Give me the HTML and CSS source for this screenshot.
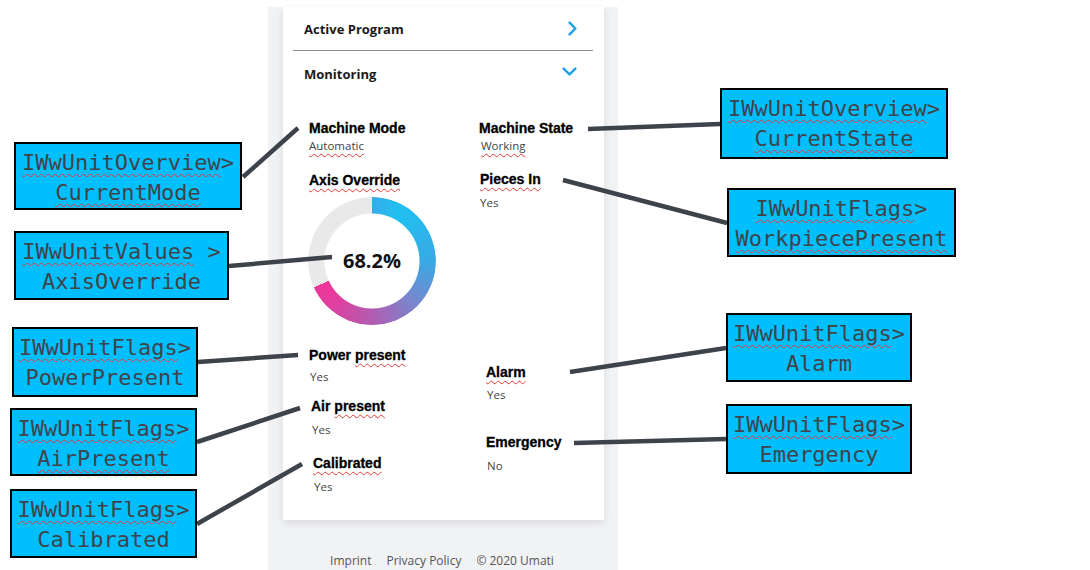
FILE: index.html
```html
<!DOCTYPE html>
<html lang="en">
<head>
<meta charset="utf-8">
<title>Monitoring mapping</title>
<link rel="stylesheet" href="styles.css">
</head>
<body>
<div class="stage">
  <div class="page">
    <div class="card">
      <div class="acc-row acc-row--first">
        <span class="acc-title">Active Program</span>
        <svg class="chev chev-r" width="9" height="15" viewBox="0 0 9 15"><path d="M1.6 1.6 L7.4 7.5 L1.6 13.4" fill="none" stroke="#1aa1e6" stroke-width="2.4" stroke-linecap="round" stroke-linejoin="round"/></svg>
      </div>
      <div class="divider"></div>
      <div class="acc-row acc-row--second">
        <span class="acc-title">Monitoring</span>
        <svg class="chev chev-d" width="15" height="9" viewBox="0 0 15 9"><path d="M1.6 1.6 L7.5 7.4 L13.4 1.6" fill="none" stroke="#1aa1e6" stroke-width="2.4" stroke-linecap="round" stroke-linejoin="round"/></svg>
      </div>
      <div class="monitor">
        <div class="col col-left">
          <div class="field f-mode">
            <div class="lbl">Machine Mode</div>
            <div class="val val--tight"><span class="sq">Automatic</span></div>
          </div>
          <div class="field f-axis">
            <div class="lbl"><span class="sq">Axis Override</span></div>
            <div class="donut">
              <div class="ring"></div>
              <div class="pct">68.2%</div>
            </div>
          </div>
          <div class="field f-power">
            <div class="lbl">Power <span class="sq">present</span></div>
            <div class="val val--6 in1">Yes</div>
          </div>
          <div class="field f-air in2">
            <div class="lbl">Air <span class="sq">present</span></div>
            <div class="val in1">Yes</div>
          </div>
          <div class="field f-calib in4">
            <div class="lbl"><span class="sq">Calibrated</span></div>
            <div class="val in1">Yes</div>
          </div>
        </div>
        <div class="col col-right">
          <div class="field f-state">
            <div class="lbl">Machine State</div>
            <div class="val val--tight in2"><span class="sq">Working</span></div>
          </div>
          <div class="field f-pieces in1">
            <div class="lbl"><span class="sq">Pieces In</span></div>
            <div class="val">Yes</div>
          </div>
          <div class="field f-alarm in7">
            <div class="lbl"><span class="sq">Alarm</span></div>
            <div class="val val--7 in1">Yes</div>
          </div>
          <div class="field f-emerg in7">
            <div class="lbl">Emergency</div>
            <div class="val in1">No</div>
          </div>
        </div>
      </div>
    </div>
    <footer class="footer">
      <span>Imprint</span>
      <span>Privacy Policy</span>
      <span>© 2020 Umati</span>
    </footer>
  </div>

  <svg class="wires" width="1090" height="570" viewBox="0 0 1090 570">
    <g stroke="#3d434b" stroke-width="4.5" fill="none">
      <line x1="243" y1="177" x2="298" y2="128"/>
      <line x1="229" y1="266" x2="332" y2="257"/>
      <line x1="198" y1="362" x2="298" y2="355"/>
      <line x1="197" y1="442" x2="300" y2="408"/>
      <line x1="197" y1="524" x2="302" y2="464"/>
      <line x1="588" y1="129" x2="720" y2="124"/>
      <line x1="563" y1="180" x2="727" y2="223"/>
      <line x1="570" y1="372" x2="726" y2="348"/>
      <line x1="574" y1="443" x2="726" y2="439"/>
    </g>
  </svg>

  <div class="callout c-mode"><div><span class="sq">IWwUnitOverview</span>&gt;</div><div><span class="sq">CurrentMode</span></div></div>
  <div class="callout c-axis"><div><span class="sq">IWwUnitValues</span> &gt;</div><div>AxisOverride</div></div>
  <div class="callout c-power"><div><span class="sq">IWwUnitFlags</span>&gt;</div><div>PowerPresent</div></div>
  <div class="callout c-air"><div><span class="sq">IWwUnitFlags</span>&gt;</div><div><span class="sq">AirPresent</span></div></div>
  <div class="callout c-calib"><div><span class="sq">IWwUnitFlags</span>&gt;</div><div>Calibrated</div></div>
  <div class="callout c-state"><div><span class="sq">IWwUnitOverview</span>&gt;</div><div><span class="sq">CurrentState</span></div></div>
  <div class="callout c-work"><div><span class="sq">IWwUnitFlags</span>&gt;</div><div><span class="sq">WorkpiecePresent</span></div></div>
  <div class="callout c-alarm"><div><span class="sq">IWwUnitFlags</span>&gt;</div><div>Alarm</div></div>
  <div class="callout c-emerg"><div><span class="sq">IWwUnitFlags</span>&gt;</div><div>Emergency</div></div>
</div>
</body>
</html>
```

FILE: styles.css
```css
* { box-sizing: border-box; }

html, body {
  margin: 0;
  padding: 0;
  background: #ffffff;
}

.stage {
  position: relative;
  width: 1090px;
  height: 570px;
  overflow: hidden;
}

.page {
  margin: 7px 0 0 268px;
  width: 350px;
  height: 563px;
  background: #f1f2f4;
  padding: 0 14px 0 15px;
}

.card {
  background: #ffffff;
  box-shadow: 0 3px 8px rgba(0, 0, 0, 0.10);
  padding-bottom: 25px;
}

.acc-row {
  display: flex;
  justify-content: space-between;
  align-items: flex-start;
  padding: 12px 27px 11px 21px;
}

.acc-row--second {
  padding-top: 13px;
  padding-bottom: 16px;
}

.acc-title {
  font-family: "Open Sans", "Noto Sans", sans-serif;
  font-weight: 700;
  font-size: 13px;
  line-height: 20px;
  color: #1a1a1a;
}

.chev { display: block; }
.chev-r { margin-top: 2px; }
.chev-d { margin-top: 3px; }

.divider {
  height: 1px;
  margin: 0 11px 0 10px;
  background: #8c8c8c;
}

.monitor {
  display: flex;
  padding-left: 26px;
}

.col-left { width: 170px; }
.col-right { flex: 1; }

.lbl {
  font-family: "Liberation Sans", Arial, sans-serif;
  font-weight: 700;
  font-size: 14px;
  line-height: 16px;
  color: #000;
  -webkit-text-stroke: 0.3px #000;
  white-space: nowrap;
}

.val {
  margin-top: 8px;
  font-family: "Open Sans", "Noto Sans", sans-serif;
  font-size: 11.5px;
  line-height: 16px;
  color: #444;
}

.val--tight { margin-top: 2px; }
.val--6 { margin-top: 6px; }
.val--7 { margin-top: 7px; }

.in1 { padding-left: 1px; }
.in2 { padding-left: 2px; }
.in4 { padding-left: 4px; }
.in7 { padding-left: 7px; }

.sq {
  text-decoration: underline wavy #e53935;
  text-decoration-thickness: 1px;
  text-underline-offset: 3px;
  text-decoration-skip-ink: none;
}

/* vertical rhythm of the left column */
.f-mode { margin-top: 20px; }
.f-axis { margin-top: 18px; }
.f-power { margin-top: 22px; }
.f-air { margin-top: 13px; }
.f-calib { margin-top: 17px; }

/* vertical rhythm of the right column */
.f-state { margin-top: 20px; }
.f-pieces { margin-top: 17px; }
.f-alarm { margin-top: 153px; }
.f-emerg { margin-top: 31px; }

.donut {
  display: grid;
  place-items: center;
  width: 128px;
  height: 128px;
  margin: 9px 0 0 -1px;
}

.ring,
.pct {
  grid-area: 1 / 1;
}

.ring {
  width: 128px;
  height: 128px;
  border-radius: 50%;
  background: conic-gradient(
    #36abe7 0deg,
    #1fc1f1 30deg,
    #38a9e4 90deg,
    #7886cd 135deg,
    #b25cb1 180deg,
    #df409f 220deg,
    #f0359a 245.5deg,
    #e9e9e9 245.5deg,
    #e9e9e9 360deg
  );
  -webkit-mask: radial-gradient(circle, transparent 47px, #000 48px);
  mask: radial-gradient(circle, transparent 47px, #000 48px);
}

.pct {
  font-family: "Open Sans", "Noto Sans", sans-serif;
  font-weight: 700;
  font-size: 20px;
  line-height: 24px;
  color: #111;
}

.footer {
  display: flex;
  justify-content: center;
  gap: 15px;
  margin-top: 33px;
  padding-right: 3px;
  font-family: "Open Sans", "Noto Sans", sans-serif;
  font-size: 12px;
  line-height: 16px;
  color: #555;
}

.wires {
  position: absolute;
  left: 0;
  top: 0;
  pointer-events: none;
}

.callout {
  position: absolute;
  background: #00bfff;
  border: 2px solid #000;
  padding-top: 4px;
  font-family: "DejaVu Sans Mono", "Liberation Mono", monospace;
  font-size: 22px;
  line-height: 30px;
  color: #404449;
  text-align: center;
  white-space: nowrap;
}

.c-mode  { left: 14px;  top: 142px; width: 228px; height: 68px; }
.c-axis  { left: 14px;  top: 231px; width: 215px; height: 69px; }
.c-power { left: 12px;  top: 327px; width: 186px; height: 70px; }
.c-air   { left: 10px;  top: 408px; width: 187px; height: 68px; }
.c-calib { left: 10px;  top: 489px; width: 187px; height: 69px; }
.c-state { left: 720px; top: 88px;  width: 228px; height: 71px; }
.c-work  { left: 727px; top: 188px; width: 229px; height: 69px; }
.c-alarm { left: 726px; top: 313px; width: 186px; height: 69px; }
.c-emerg { left: 726px; top: 404px; width: 186px; height: 70px; }
```
